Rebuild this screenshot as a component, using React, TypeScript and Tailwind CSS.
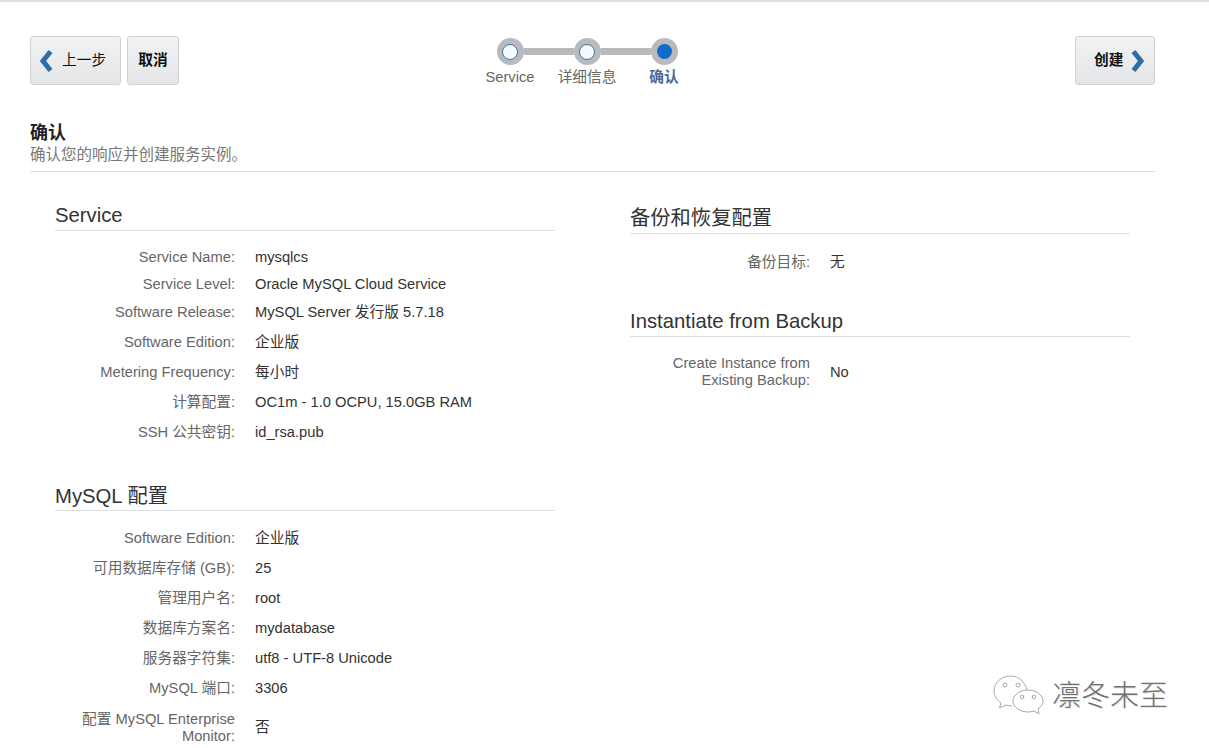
import { ReactNode } from 'react';

const font = '[font-family:"Liberation_Sans","Noto_Sans_CJK_SC",sans-serif]';

interface Row {
  label: ReactNode;
  value: string;
  cls: string;
}

const serviceRows: Row[] = [
  { label: 'Service Name:', value: 'mysqlcs', cls: 'h-[27px]' },
  { label: 'Service Level:', value: 'Oracle MySQL Cloud Service', cls: 'h-[27px]' },
  { label: 'Software Release:', value: 'MySQL Server 发行版 5.7.18', cls: 'h-[29px]' },
  { label: 'Software Edition:', value: '企业版', cls: 'h-[30px]' },
  { label: 'Metering Frequency:', value: '每小时', cls: 'h-[30px]' },
  { label: '计算配置:', value: 'OC1m - 1.0 OCPU, 15.0GB RAM', cls: 'h-[30px]' },
  { label: 'SSH 公共密钥:', value: 'id_rsa.pub', cls: 'h-[30px]' },
];

const mysqlRows: Row[] = [
  { label: 'Software Edition:', value: '企业版', cls: 'h-[30px]' },
  { label: '可用数据库存储 (GB):', value: '25', cls: 'h-[30px]' },
  { label: '管理用户名:', value: 'root', cls: 'h-[30px]' },
  { label: '数据库方案名:', value: 'mydatabase', cls: 'h-[30px]' },
  { label: '服务器字符集:', value: 'utf8 - UTF-8 Unicode', cls: 'h-[30px]' },
  { label: 'MySQL 端口:', value: '3306', cls: 'h-[30px]' },
  { label: <>配置 MySQL Enterprise<br />Monitor:</>, value: '否', cls: 'h-[49px]' },
];

function InfoRow({ row }: { row: Row }) {
  return (
    <div className={`flex items-center text-[14.7px] leading-[17px] ${row.cls}`}>
      <div className="w-[180px] text-right text-[#666666]">{row.label}</div>
      <div className="ml-[20px] text-[#333333]">{row.value}</div>
    </div>
  );
}

function Section({ title, rows, cls, titleCls = 'h-[28px]', bodyCls = 'mt-[13px]' }: {
  title: string;
  rows: Row[];
  cls?: string;
  titleCls?: string;
  bodyCls?: string;
}) {
  return (
    <section className={cls}>
      <h2 className={`border-b border-[#dcdfe2] text-[20.3px] leading-[24px] text-[#333333] ${titleCls}`}>{title}</h2>
      <div className={bodyCls}>
        {rows.map((row, i) => (
          <InfoRow key={i} row={row} />
        ))}
      </div>
    </section>
  );
}

function Chevron({ dir, cls }: { dir: 'left' | 'right'; cls?: string }) {
  return (
    <svg width="15" height="24" viewBox="0 0 15 24" className={`shrink-0 ${cls ?? ''}`}>
      <path
        d={dir === 'left' ? 'M11.500 2.500 L4 12 L11.500 21.500' : 'M3.500 2.500 L11 12 L3.500 21.500'}
        fill="none"
        stroke="#2f6ea5"
        strokeWidth="5"
        strokeLinejoin="miter"
      />
    </svg>
  );
}

function Step({ label, active }: { label: string; active?: boolean }) {
  return (
    <div className="relative flex w-[27px] flex-col items-center">
      <div className="flex size-[27px] items-center justify-center rounded-full bg-[#b8babd]">
        <div
          className={
            active
              ? 'size-[15px] rounded-full bg-[#0f6cc8]'
              : 'size-[16px] rounded-full border border-[#3f78a8] bg-[#f2fbff]'
          }
        />
      </div>
      <span
        className={`absolute top-[29px] whitespace-nowrap text-[14.7px] leading-[20px] ${
          active ? 'font-bold text-[#4a6a9c]' : 'text-[#666666]'
        }`}
      >
        {label}
      </span>
    </div>
  );
}

function Stepper() {
  return (
    <div className="mr-[80px] flex items-start pt-[2px]">
      <Step label="Service" />
      <div className="mt-[10px] h-[7px] w-[50px] bg-[#b8babd]" />
      <Step label="详细信息" />
      <div className="mt-[10px] h-[7px] w-[50px] bg-[#b8babd]" />
      <Step label="确认" active />
    </div>
  );
}

const buttonCls =
  'flex h-[49px] items-center rounded-[3px] border border-[#d0d3d6] bg-gradient-to-b from-[#f1f2f3] to-[#e3e5e7] text-[14.7px] font-bold text-[#111111]';

function Watermark() {
  return (
    <div className="absolute left-[993px] top-[674px] flex items-center">
      <svg width="52" height="44" viewBox="0 0 52 44" fill="none" stroke="#a8a8a8" strokeWidth="1">
        <path d="M18 2 C8 2 1 9 1 17 C1 22 4 26 8 29 L6.500 34 L13 31 C15 31.500 17 32 19 32" />
        <path d="M34 16 C32 8 26 2 18 2" />
        <path d="M35 16 C27 16 20 21 20 27 C20 33 27 38 35 38 C37 38 39 37.500 41 37 L46 40 L45 35 C48 33 50 30 50 27 C50 21 43 16 35 16 Z" />
        <circle cx="12" cy="11" r="2" />
        <circle cx="25" cy="11" r="2" />
        <circle cx="29" cy="23" r="1.800" />
        <circle cx="41" cy="23" r="1.800" />
      </svg>
      <span className="ml-[7px] text-[29px] font-light leading-[36px] text-[#707070] [text-shadow:1px_1px_0_#e8e8e8]">
        凛冬未至
      </span>
    </div>
  );
}

export default function App() {
  return (
    <div className={`relative h-[748px] w-[1209px] overflow-hidden bg-white ${font}`}>
      <div className="h-[2px] bg-[#dedede]" />

      <div className="ml-[30px] w-[1125px]">
        <div className="mt-[34px] flex h-[49px] items-start justify-between">
          <div className="flex gap-[6px]">
            <button className={`${buttonCls} w-[91px] pl-[8px]`}>
              <Chevron dir="left" />
              <span className="ml-[8px] font-normal text-[#111111]">上一步</span>
            </button>
            <button className={`${buttonCls} w-[52px] justify-center`}>取消</button>
          </div>
          <Stepper />
          <button className={`${buttonCls} w-[80px] pl-[18px]`}>
            创建
            <Chevron dir="right" cls="ml-[7px]" />
          </button>
        </div>

        <div className="mt-[37px] border-b border-[#dcdfe2] pb-[6px]">
          <h1 className="text-[18px] font-bold leading-[22px] text-[#222222]">确认</h1>
          <p className="text-[15.500px] leading-[21px] text-[#777777]">确认您的响应并创建服务实例。</p>
        </div>

        <div className="mt-[31px] flex pl-[25px]">
          <div className="w-[500px]">
            <Section title="Service" rows={serviceRows} />
            <Section
              title="MySQL 配置"
              rows={mysqlRows}
              cls="mt-[37px]"
              titleCls="h-[27px]"
              bodyCls="mt-[12px]"
            />
          </div>
          <div className="ml-[75px] w-[500px] pt-[3px]">
            <Section title="备份和恢复配置" rows={[{ label: '备份目标:', value: '无', cls: 'h-[30px]' }]} />
            <Section
              title="Instantiate from Backup"
              rows={[
                {
                  label: <>Create Instance from<br />Existing Backup:</>,
                  value: 'No',
                  cls: 'h-[44px]',
                },
              ]}
              cls="mt-[32px]"
            />
          </div>
        </div>
      </div>

      <Watermark />
    </div>
  );
}
